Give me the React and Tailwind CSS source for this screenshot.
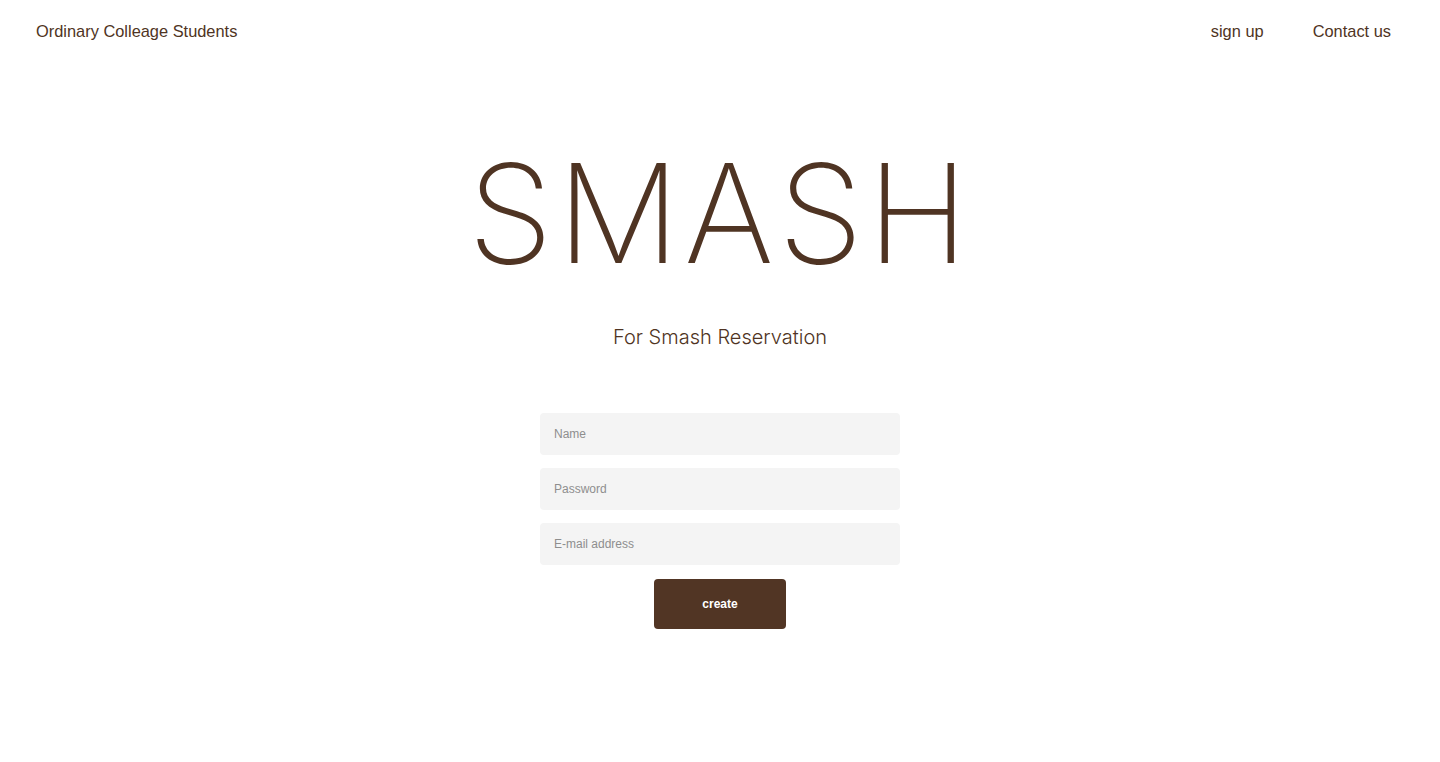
import React from "react";

export default function App() {
  const brown = "text-[#4f3423]";
  return (
    <div className="min-h-[762px] w-full bg-white" style={{ fontFamily: '"Liberation Sans", Arial, sans-serif' }}>
      <header className={`flex items-center justify-between h-[63px] pl-[36px] pr-[49px] text-[16.4px] ${brown}`}>
        <span>Ordinary Colleage Students</span>
        <nav className="flex gap-[49px]">
          <span>sign up</span>
          <span>Contact us</span>
        </nav>
      </header>
      <main className="flex flex-col items-center">
        <h1
          className={`mt-[82px] text-[137px] leading-[137px] font-extralight tracking-[4px] ${brown}`}
          style={{ fontFamily: 'Inter, "Liberation Sans", sans-serif' }}
        >
          SMASH
        </h1>
        <p
          className={`mt-[42px] text-[20px] leading-[26px] font-light ${brown}`}
          style={{ fontFamily: 'Inter, "Liberation Sans", sans-serif' }}
        >
          For Smash Reservation
        </p>
        <form className="mt-[63px] flex flex-col items-center w-[360px]">
          <input
            placeholder="Name"
            className="w-full h-[42px] rounded-[4px] bg-[#f4f4f4] px-[14px] text-[12px] placeholder-[#8e8e8e] outline-none"
          />
          <input
            placeholder="Password"
            type="password"
            className="mt-[13px] w-full h-[42px] rounded-[4px] bg-[#f4f4f4] px-[14px] text-[12px] placeholder-[#8e8e8e] outline-none"
          />
          <input
            placeholder="E-mail address"
            className="mt-[13px] w-full h-[42px] rounded-[4px] bg-[#f4f4f4] px-[14px] text-[12px] placeholder-[#8e8e8e] outline-none"
          />
          <button
            type="button"
            className="mt-[14px] w-[132px] h-[50px] rounded-[4px] bg-[#513524] text-white text-[12px] font-bold"
          >
            create
          </button>
        </form>
      </main>
    </div>
  );
}
